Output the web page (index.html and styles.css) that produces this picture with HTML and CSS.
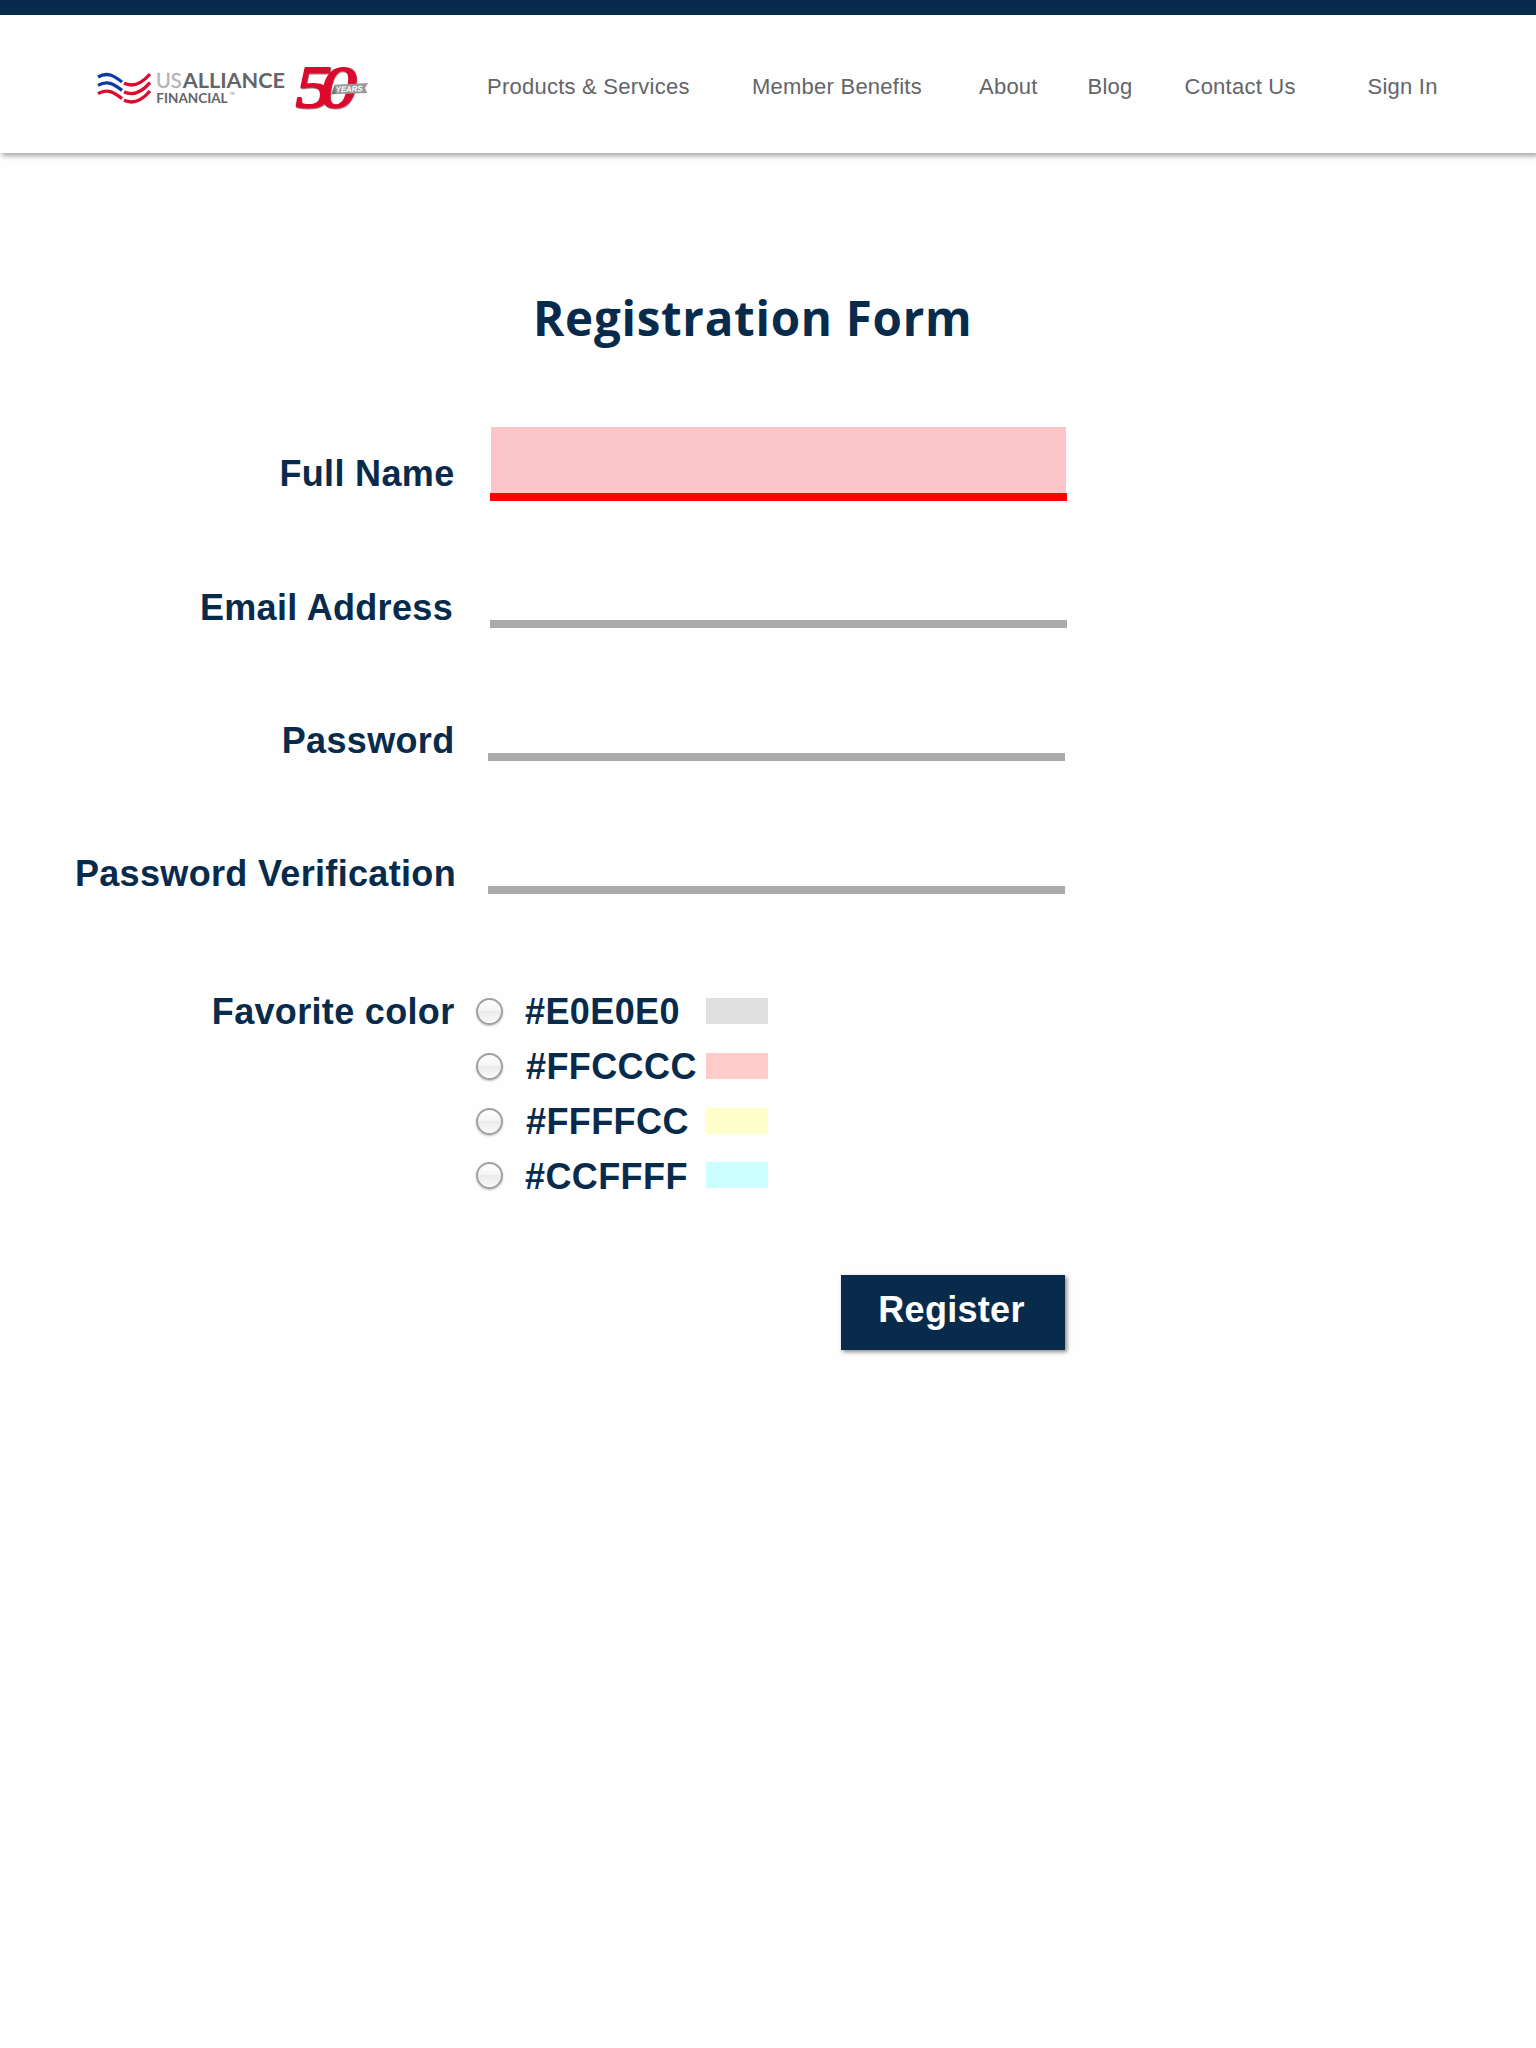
FILE: index.html
```html
<!DOCTYPE html>
<html lang="en">
<head>
<meta charset="utf-8">
<title>Registration Form</title>
<link rel="stylesheet" href="styles.css">
</head>
<body>
<header class="header">
  <a class="logo" aria-label="USAlliance Financial">
    <svg width="300" height="80" viewBox="0 0 900 240">
      <g fill="none" stroke-width="10">
        <path stroke="#0d3ba6" d="M54 81C84 64 104 79 126 96M54 106C84 89 104 104 126 121"/>
        <path stroke="#dc0a2d" d="M54 131C84 114 104 129 126 146M132 100C161 113 186 100 210 72M132 126C161 139 186 126 210 98M132 151C161 164 186 151 210 123"/>
      </g>
      <text class="logo-name" x="228" y="115" textLength="77" lengthAdjust="spacingAndGlyphs"><tspan class="logo-us">US</tspan></text>
      <text class="logo-name" x="308" y="115" textLength="307" lengthAdjust="spacingAndGlyphs">ALLIANCE</text>
      <text class="logo-sub" x="229" y="158" textLength="214" lengthAdjust="spacingAndGlyphs">FINANCIAL</text>
      <text class="logo-tm" x="449" y="136">TM</text>
      <text class="logo-fifty logo-fifty-shade" x="0 62" y="0" transform="translate(649 173) scale(1.2 1)">50</text>
      <text class="logo-fifty" x="0 62" y="0" transform="translate(647 171) scale(1.2 1)">50</text>
      <path fill="#97999b" d="M764 104L864 99L855 114L862 129L754 133Z"/>
      <path fill="#77797c" d="M754 133L764 104L768 132Z"/>
      <text class="logo-years" x="767" y="127" textLength="81" lengthAdjust="spacingAndGlyphs" transform="rotate(-2 767 127)">YEARS</text>
    </svg>
  </a>
  <nav class="nav">
    <a>Products &amp; Services</a>
    <a>Member Benefits</a>
    <a>About</a>
    <a>Blog</a>
    <a>Contact Us</a>
    <a>Sign In</a>
  </nav>
</header>
<main>
  <h1 class="title">Registration Form</h1>
  <form class="form">
    <div class="row row-name">
      <label class="label" for="name">Full Name</label>
      <div class="field field-error"><input id="name" type="text"></div>
    </div>
    <div class="row row-email">
      <label class="label" for="email">Email Address</label>
      <div class="field"><input id="email" type="email"></div>
    </div>
    <div class="row row-password">
      <label class="label" for="password">Password</label>
      <div class="field"><input id="password" type="password"></div>
    </div>
    <div class="row row-verify">
      <label class="label" for="verify">Password Verification</label>
      <div class="field"><input id="verify" type="password"></div>
    </div>
    <div class="colors">
      <span class="label">Favorite color</span>
      <div class="options">
        <label class="option"><input class="radio" type="radio" name="color"><span class="code">#E0E0E0</span><span class="swatch gray"></span></label>
        <label class="option inset"><input class="radio" type="radio" name="color"><span class="code">#FFCCCC</span><span class="swatch pink"></span></label>
        <label class="option inset"><input class="radio" type="radio" name="color"><span class="code">#FFFFCC</span><span class="swatch yellow"></span></label>
        <label class="option last"><input class="radio" type="radio" name="color"><span class="code">#CCFFFF</span><span class="swatch cyan"></span></label>
      </div>
    </div>
    <button class="register" type="button">Register</button>
  </form>
</main>
</body>
</html>
```
FILE: styles.css
```css
* { box-sizing: border-box; }

body {
  margin: 0;
  min-height: 2048px;
  background: #fefefe;
  color: #082b4b;
  font-family: "Liberation Sans", Arial, sans-serif;
}

.header {
  display: flex;
  height: 153px;
  padding-left: 80px;
  border-top: 15px solid #082b4b;
  background: #fefefe;
  box-shadow: 2px 3px 5px rgba(0, 0, 0, 0.35);
}

.logo { width: 407px; padding-top: 35px; }
.logo svg { display: block; }
.logo-name { font: 700 63px Lato, sans-serif; fill: #636569; }
.logo-us { font-weight: 400; fill: #b5b3b2; stroke: #b5b3b2; stroke-width: 1px; }
.logo-sub { font: 700 38px Lato, sans-serif; fill: #636569; }
.logo-tm { font: 9px Lato, sans-serif; fill: #636569; }
.logo-fifty { font: italic 400 180px "Liberation Serif", serif; fill: #dc0a2d; stroke: #dc0a2d; stroke-width: 6px; stroke-linejoin: round; }
.logo-fifty-shade { fill: #a98188; stroke: #a98188; }
.logo-years { font: italic 700 25px "Liberation Sans", sans-serif; fill: #fff; }

.nav {
  display: grid;
  grid-template-columns: 265px 227px 108.5px 97px 183px auto;
  align-content: start;
  padding-top: 59px;
  color: #636569;
  font-size: 22px;
  line-height: 25px;
  letter-spacing: 0.24px;
  white-space: nowrap;
}

.title {
  margin: 133px 0 0 533px;
  font: 700 47.5px/64px "Open Sans", sans-serif;
  letter-spacing: 0.73px;
}

.form { padding-top: 77px; }

.row { display: flex; align-items: flex-end; }
.row-name { height: 74px; }
.row-email { height: 127px; }
.row-password, .row-verify { height: 133px; }

.label {
  width: 454.5px;
  margin-right: 0.5px;
  text-align: right;
  font-size: 36px;
  font-weight: 700;
  line-height: 41px;
  letter-spacing: 0.33px;
  white-space: nowrap;
}
.row-name .label { margin-bottom: 7px; }
.row-email .label { width: 453px; margin-right: 2px; }
.row-verify .label { width: 456px; margin-right: -1px; }

.field {
  width: 577px;
  margin-left: 35px;
  padding: 0 1px;
  border-bottom: 8px solid #ababab;
}
.row-password .field, .row-verify .field { margin-left: 33px; }
.field-error { border-color: #f00; }
.field input {
  display: block;
  width: 100%;
  height: 66px;
  padding: 0 12px;
  border: 0;
  outline: 0;
  background: transparent;
  font: 30px "Liberation Sans", Arial, sans-serif;
}
.field-error input { background: #fbc5ca; }

.colors { display: flex; margin-top: 90px; }
.colors .label { padding-top: 7px; }
.options { padding-left: 21px; }
.option {
  display: flex;
  height: 55px;
  padding-top: 14px;
}
.radio {
  appearance: none;
  width: 27px;
  height: 27px;
  margin: 0;
  border: 2px solid #a0a0a0;
  border-radius: 50%;
  background: linear-gradient(#fff 0%, #f4f4f4 49%, #ebebeb 50%, #fafafa 100%);
  box-shadow: 0 1px 2px rgba(0, 0, 0, 0.25);
}
.code {
  width: 181px;
  margin: -7px 0 0 22px;
  font-size: 36px;
  font-weight: 700;
  line-height: 41px;
  letter-spacing: 0.4px;
}
.inset .code { width: 180px; margin-left: 23px; }
.swatch { width: 62px; height: 26px; }
.last .radio { margin-top: -1px; }
.last .swatch { margin-top: -1px; }
.gray { background: #e0e0e0; }
.pink { background: #fcc; }
.yellow { background: #ffc; }
.cyan { background: #cff; }

.register {
  display: block;
  width: 224px;
  height: 75px;
  margin: 71px 0 0 841px;
  padding: 0 3px 6px 0;
  border: 0;
  background: #082b4b;
  box-shadow: 2px 2px 4px rgba(40, 15, 0, 0.5);
  color: #fff;
  font: 700 36px/41px "Liberation Sans", Arial, sans-serif;
  letter-spacing: 0.3px;
}
```
